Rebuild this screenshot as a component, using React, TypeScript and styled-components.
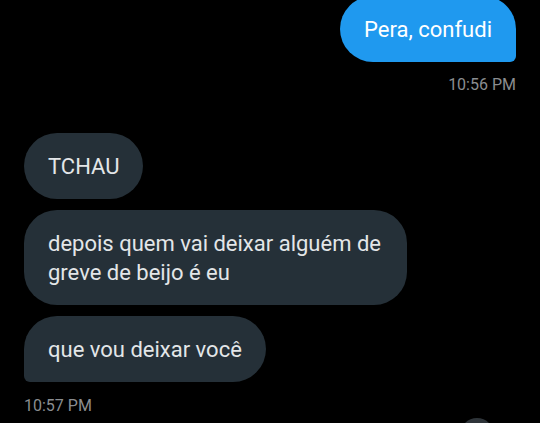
import styled, { createGlobalStyle } from "styled-components";

const GlobalStyle = createGlobalStyle`
  html, body {
    margin: 0;
    padding: 0;
    background: #000000;
  }
  body {
    font-family: Roboto, "Noto Sans", "Liberation Sans", sans-serif;
  }
`;

const Screen = styled.div`
  width: 540px;
  height: 423px;
  overflow: hidden;
  background: #000000;
  display: flex;
  flex-direction: column;
  padding: 0 24px;
  box-sizing: border-box;
`;

const Group = styled.div<{ sent?: boolean }>`
  display: flex;
  flex-direction: column;
  align-items: ${(p) => (p.sent ? "flex-end" : "flex-start")};
  gap: 11px;
`;

const Bubble = styled.div<{ sent?: boolean; last?: boolean }>`
  box-sizing: border-box;
  max-width: 383px;
  padding: 18.5px 24px;
  font-size: 22px;
  line-height: 29px;
  color: ${(p) => (p.sent ? "#ffffff" : "#e3e6e8")};
  background: ${(p) => (p.sent ? "#1f99ef" : "#253038")};
  border-radius: 33px;
  ${(p) => p.last && (p.sent ? "border-bottom-right-radius: 6px;" : "border-bottom-left-radius: 6px;")}
`;

const Time = styled.div<{ sent?: boolean }>`
  font-size: 16px;
  line-height: 20px;
  color: #8a8d90;
  align-self: ${(p) => (p.sent ? "flex-end" : "flex-start")};
`;

const Avatar = styled.div`
  align-self: flex-end;
  width: 34px;
  height: 34px;
  border-radius: 50%;
  background: #2e3439;
  margin: 2px 22px 0 0;
  flex-shrink: 0;
`;

function App() {
  return (
    <>
      <GlobalStyle />
      <Screen>
        <Group sent style={{ marginTop: -4 }}>
          <Bubble sent last>
            Pera, confudi
          </Bubble>
        </Group>
        <Time sent style={{ marginTop: 13 }}>
          10:56 PM
        </Time>
        <Group style={{ marginTop: 38 }}>
          <Bubble>TCHAU</Bubble>
          <Bubble>depois quem vai deixar alguém de greve de beijo é eu</Bubble>
          <Bubble last>que vou deixar você</Bubble>
        </Group>
        <Time style={{ marginTop: 14 }}>10:57 PM</Time>
        <Avatar />
      </Screen>
    </>
  );
}

export default App;
